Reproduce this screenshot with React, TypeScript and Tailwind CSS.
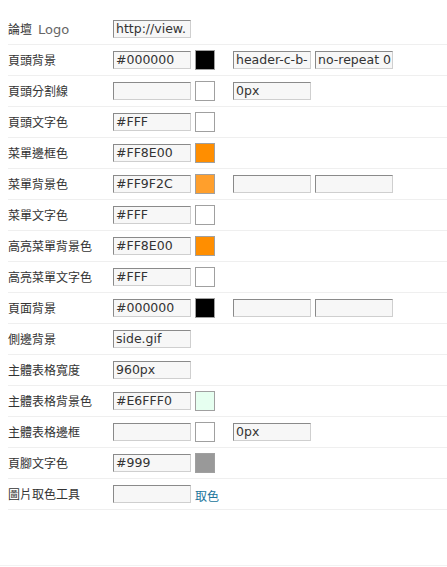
import React from "react";

type Row = {
  label: React.ReactNode;
  value: string;
  swatch?: string;
  extra?: string[];
  link?: boolean;
};

const rows: Row[] = [
  {
    label: (
      <>
        論壇
        <span className="ml-[6px] text-[#666] text-[13px]" style={{ fontFamily: '"DejaVu Sans", Verdana, sans-serif' }}>
          Logo
        </span>
      </>
    ),
    value: "http://view.",
  },
  { label: "頁頭背景", value: "#000000", swatch: "#000000", extra: ["header-c-b-", "no-repeat 0"] },
  { label: "頁頭分割線", value: "", swatch: "#FFFFFF", extra: ["0px"] },
  { label: "頁頭文字色", value: "#FFF", swatch: "#FFFFFF" },
  { label: "菜單邊框色", value: "#FF8E00", swatch: "#FF8E00" },
  { label: "菜單背景色", value: "#FF9F2C", swatch: "#FF9F2C", extra: ["", ""] },
  { label: "菜單文字色", value: "#FFF", swatch: "#FFFFFF" },
  { label: "高亮菜單背景色", value: "#FF8E00", swatch: "#FF8E00" },
  { label: "高亮菜單文字色", value: "#FFF", swatch: "#FFFFFF" },
  { label: "頁面背景", value: "#000000", swatch: "#000000", extra: ["", ""] },
  { label: "側邊背景", value: "side.gif" },
  { label: "主體表格寬度", value: "960px" },
  { label: "主體表格背景色", value: "#E6FFF0", swatch: "#E6FFF0" },
  { label: "主體表格邊框", value: "", swatch: "#FFFFFF", extra: ["0px"] },
  { label: "頁腳文字色", value: "#999", swatch: "#999999" },
  { label: "圖片取色工具", value: "", link: true },
];

function Field({ value, className = "" }: { value: string; className?: string }) {
  return (
    <div
      className={
        "w-[78px] h-[18px] shrink-0 overflow-hidden whitespace-nowrap bg-[#f7f7f7] border border-t-[#8a8a8a] border-l-[#8a8a8a] border-b-[#cfcfcf] border-r-[#cfcfcf] pl-[2px] text-[12.5px] leading-[16px] text-[#333] " +
        className
      }
      style={{ fontFamily: '"DejaVu Sans", Verdana, sans-serif' }}
    >
      {value}
    </div>
  );
}

export default function App() {
  return (
    <div className="w-[447px] h-[567px] bg-white relative overflow-hidden">
      <div className="pt-[14px] pl-[8px]">
        {rows.map((r, i) => (
          <div key={i} className="flex items-center h-[31px] border-b border-[#efefef]">
            <div
              className="w-[105px] shrink-0 text-[12px] text-[#333] leading-[14px]"
              style={{ fontFamily: '"Noto Sans CJK TC", "DejaVu Sans", sans-serif' }}
            >
              {r.label}
            </div>
            <Field value={r.value} />
            {r.swatch && (
              <div
                className="ml-[4px] w-[20px] h-[20px] shrink-0 border border-[#a0a0a0]"
                style={{ backgroundColor: r.swatch }}
              />
            )}
            {r.extra && (
              <div className="flex ml-[18px] gap-[4px]">
                {r.extra.map((e, j) => (
                  <Field key={j} value={e} />
                ))}
              </div>
            )}
            {r.link && (
              <a
                className="ml-[4px] text-[12px] text-[#21759b] leading-[14px] mt-[4px]"
                style={{ fontFamily: '"Noto Sans CJK TC", sans-serif' }}
              >
                取色
              </a>
            )}
          </div>
        ))}
      </div>
      <div className="absolute left-0 right-0 top-[565px] border-t border-[#f2f2f2]" />
    </div>
  );
}
